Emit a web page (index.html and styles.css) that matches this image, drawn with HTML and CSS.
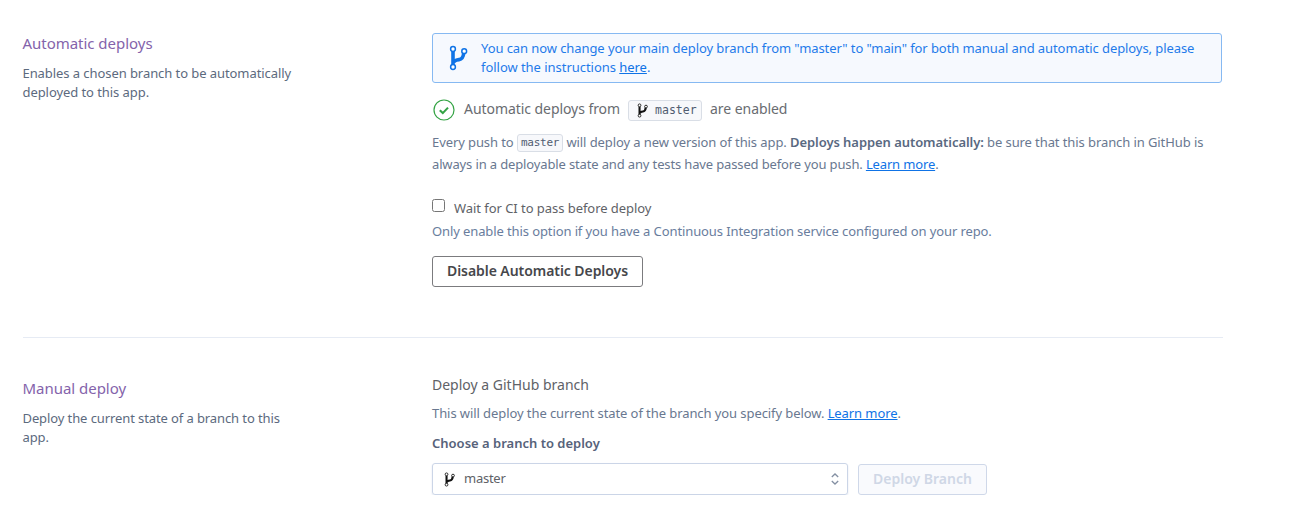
FILE: index.html
```html
<!DOCTYPE html>
<html lang="en">
<head>
<meta charset="utf-8">
<title>Deploy</title>
<link rel="stylesheet" href="styles.css">
</head>
<body>
<svg class="defs" width="0" height="0" aria-hidden="true">
  <symbol id="branch" viewBox="0 0 20 26">
    <path d="M4 6v15M4 17.500L6 15.800Q7 15 10 14.600Q14.300 14 14.700 8" fill="none" stroke="currentColor" stroke-width="3.600"/>
    <g class="node" stroke="currentColor" stroke-width="1.500">
      <circle cx="4" cy="4" r="2.400"/><circle cx="15.200" cy="6.200" r="2.400"/><circle cx="4" cy="22" r="2.400"/>
    </g>
  </symbol>
</svg>
<main class="page">
  <section class="row auto">
    <div class="side">
      <h2 class="title">Automatic deploys</h2>
      <p class="desc">Enables a chosen branch to be automatically<br>deployed to this app.</p>
    </div>
    <div class="content">
      <div class="banner">
        <svg class="banner-icon"><use href="#branch"/></svg>
        <p>You can now change your main deploy branch from "master" to "main" for both manual and automatic deploys, please<br><span class="follow">follow the instructions <a href="#">here</a>.</span></p>
      </div>
      <div class="status">
        <svg class="check" viewBox="0 0 22 22"><circle cx="11" cy="11" r="10" /><path d="M6.800 11.200l3 2.900 5.200-5.500"/></svg>
        <span class="status-text">Automatic deploys from</span>
        <span class="chip"><svg><use href="#branch"/></svg><code>master</code></span>
        <span class="status-text">are enabled</span>
      </div>
      <p class="help">Every push to <code class="tag">master</code> will deploy a new version of this app. <strong>Deploys happen automatically:</strong> be sure that this branch in GitHub is<br><span class="second">always in a deployable state and any tests have passed before you push. <a href="#">Learn more</a>.</span></p>
      <label class="wait"><input type="checkbox"><span>Wait for CI to pass before deploy</span></label>
      <p class="note">Only enable this option if you have a Continuous Integration service configured on your repo.</p>
      <button class="btn disable">Disable Automatic Deploys</button>
    </div>
  </section>
  <section class="row manual">
    <div class="side">
      <h2 class="title">Manual deploy</h2>
      <p class="desc">Deploy the current state of a branch to this<br>app.</p>
    </div>
    <div class="content">
      <h3 class="sub">Deploy a GitHub branch</h3>
      <p class="info">This will deploy the current state of the branch you specify below. <a href="#">Learn more</a>.</p>
      <p class="choose">Choose a branch to deploy</p>
      <div class="controls">
        <div class="select"><svg class="select-icon"><use href="#branch"/></svg><span>master</span><svg class="arrows" viewBox="0 0 8 12"><path d="M.8 4L4 1l3.200 3M.8 8L4 11l3.200-3"/></svg></div>
        <button class="btn deploy" disabled>Deploy Branch</button>
      </div>
    </div>
  </section>
</main>
</body>
</html>
```
FILE: styles.css
```css
* { box-sizing: border-box; }
body { margin: 0; background: #fff; font: 13px/19px "Noto Sans", sans-serif; color: #596981; }
h2, h3, p { margin: 0; font-weight: 400; white-space: nowrap; }
svg { display: block; flex: none; }
a { color: #0f73e6; text-underline-offset: 1px; }
.defs { display: block; height: 0; }
.node { fill: #fff; }
.page { width: 1200px; margin-left: 23px; }
.row { display: grid; grid-template-columns: 409px 791px; }
.auto { padding-top: 33px; height: 338px; border-bottom: 1px solid #e6ebf4; }
.side { margin-left: -.5px; }
.title { font-size: 15px; line-height: 20px; letter-spacing: -.03px; color: #8463ab; }
.desc { margin-top: 11px; letter-spacing: -.07px; color: #5c6a7e; }
.manual .desc { letter-spacing: -.1px; }
.banner { display: flex; width: 790px; height: 50px; padding: 5px 0 0 16px; border: 1px solid #86b9f2; border-radius: 3px; background: #f6f9fe; color: #1f7bea; letter-spacing: -.083px; }
.banner-icon { width: 20px; height: 26px; margin: 6px 12px 0 0; color: #0f73e6; }
.follow { letter-spacing: -.04px; }
.status { display: flex; height: 22px; margin-top: 16px; align-items: center; font-size: 14px; color: #696c71; white-space: nowrap; }
.check { width: 22px; height: 22px; margin: 0 9px 0 1px; fill: none; stroke: #34a344; stroke-width: 1.200; }
.check path { stroke-width: 2.100; }
.status-text { letter-spacing: -.06px; padding-bottom: 3px; }
.chip { display: flex; align-items: center; width: 74px; height: 21px; margin: 0 8px; padding-left: 8px; border: 1px solid #d9dee6; border-radius: 3px; background: #f7f8fb; color: #111; }
.chip svg { width: 12px; height: 15px; margin-right: 6px; }
code { font: 11.500px/16px "DejaVu Sans Mono", monospace; color: #505c70; letter-spacing: 0; }
.help { margin-top: 10px; line-height: 22px; letter-spacing: -.09px; color: #697890; }
.help strong { font-weight: 600; letter-spacing: -.06px; color: #596981; }
.second { letter-spacing: -.14px; }
.tag { display: inline-block; height: 18px; padding: 0 3px; border: 1px solid #d9dee6; border-radius: 3px; background: #f7f8fb; font-size: 11px; letter-spacing: -.25px; position: relative; top: -1px; }
.wait { display: flex; height: 20px; margin-top: 24px; letter-spacing: -.05px; color: #606267; }
.wait input { width: 13px; height: 13px; margin: 0 9px 0 0; }
.wait span { white-space: nowrap; }
.note { margin-top: 3px; letter-spacing: -.105px; color: #697d9d; }
.btn { height: 31px; padding: 0 0 2px; border: 1px solid #7b7b7e; border-radius: 3px; background: #fff; color: #46474b; font: 600 14px/19px "Noto Sans", sans-serif; white-space: nowrap; }
.disable { display: block; width: 211px; margin-top: 15px; letter-spacing: -.06px; }
.manual { padding-top: 37px; }
.manual .side { padding-top: 3px; }
.sub { font-size: 14px; color: #606267; }
.info { margin-top: 10px; letter-spacing: -.08px; color: #697890; }
.choose { margin-top: 11px; font-weight: 600; color: #56627a; }
.controls { display: flex; align-items: flex-end; gap: 10px; margin-top: 10px; }
.select { display: flex; align-items: center; width: 416px; height: 32px; padding: 0 8px 0 11px; border: 1px solid #cbd5e7; border-radius: 3px; box-shadow: 0 1px 2px #dfe5ef; letter-spacing: -.25px; color: #606267; }
.select span { padding-bottom: 2px; }
.select-icon { width: 12px; height: 15px; margin-right: 8px; color: #111; }
.arrows { width: 8px; height: 12px; margin-left: auto; fill: none; stroke: #8490a3; stroke-width: 1.300; }
.deploy { width: 129px; border-color: #cfd8e9; background: #f9fafd; color: #cfd7e6; }
```
